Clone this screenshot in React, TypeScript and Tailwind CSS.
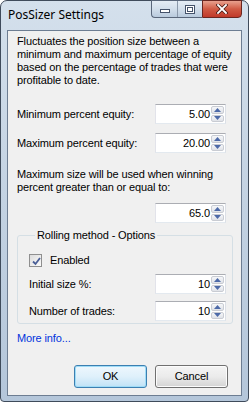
const ui = { fontFamily: '"Liberation Sans", Arial, sans-serif' };

function Spin({ value }: { value: string }) {
  return (
    <div className="w-[71px] h-[20px] flex bg-white border border-t-[#abadb3] border-l-[#e2e3ea] border-r-[#dbdfe6] border-b-[#e3e9ef]">
      <div className="flex-1 text-right text-[11px] leading-[18px] pr-[1px] text-black">{value}</div>
      <div className="w-[14px] flex flex-col gap-[1px] py-[1px] pr-[1px]">
        <SpinBtn up />
        <SpinBtn />
      </div>
    </div>
  );
}

function SpinBtn({ up }: { up?: boolean }) {
  return (
    <div className="flex-1 flex items-center justify-center border border-[#c9ccd3] rounded-[2px] bg-gradient-to-b from-[#f6f7f9] to-[#dfe2e8]">
      <svg width="7" height="4" viewBox="0 0 7 4">
        {up ? <path d="M3.5 0 L7 4 L0 4 Z" fill="#4d6aa8" /> : <path d="M0 0 L7 0 L3.5 4 Z" fill="#4d6aa8" />}
      </svg>
    </div>
  );
}

function SpinRow({ label, value }: { label: string; value: string }) {
  return (
    <div className="flex items-center h-[20px]">
      <span className="text-[11px] leading-[13px]">{label}</span>
      <div className="ml-auto">
        <Spin value={value} />
      </div>
    </div>
  );
}

function DlgButton({ children, primary }: { children: React.ReactNode; primary?: boolean }) {
  return (
    <div
      className={
        "w-[73px] h-[23px] rounded-[3px] border flex items-center justify-center text-[11px] " +
        (primary
          ? "border-[#3c7fb1] bg-gradient-to-b from-[#eef7fd] via-[#dff0fb] to-[#bfe2f6] shadow-[inset_0_0_0_1px_#9fdcf7]"
          : "border-[#707070] bg-gradient-to-b from-[#f4f4f4] via-[#ebebeb] to-[#d4d4d4] shadow-[inset_0_0_0_1px_#fcfcfc]")
      }
    >
      {children}
    </div>
  );
}

export default function App() {
  return (
    <div className="w-[249px] h-[402px] bg-white tracking-[-0.12px]" style={ui}>
      <div className="w-full h-full rounded-t-[7px] rounded-b-[4px] border border-[#3f4b5b] bg-gradient-to-b from-[#d4e0ec] via-[#c3d2e2] to-[#b4c6da] flex flex-col px-[6px] pb-[5px]">
        {/* title bar */}
        <div className="h-[29px] flex items-start shrink-0">
          <span className="mt-[7px] ml-[1px] text-[12px] leading-[14px] text-black tracking-normal" style={{ fontFamily: '"Noto Sans", "Liberation Sans", sans-serif' }}>
            PosSizer Settings
          </span>
          <div className="ml-auto flex mt-[-1px]">
            <div className="flex h-[18px] border border-[#59667a] border-r-0 rounded-bl-[4px] bg-gradient-to-b from-[#e4ecf5] via-[#d2deeb] to-[#b9cadd] overflow-hidden">
              <div className="w-[26px] flex items-center justify-center border-r border-[#8b99ab]">
                <div className="w-[10px] h-[4px] mt-[4px] border border-[#44526a] bg-white" />
              </div>
              <div className="w-[24px] flex items-center justify-center">
                <div className="w-[10px] h-[9px] border border-[#44526a] bg-white flex items-center justify-center">
                  <div className="w-[6px] h-[5px] border border-[#44526a]" />
                </div>
              </div>
            </div>
            <div className="w-[40px] h-[18px] flex items-center justify-center border border-[#6b2620] rounded-br-[4px] bg-gradient-to-b from-[#e8a08e] via-[#d05a44] to-[#c0392a]">
              <svg width="12" height="10" viewBox="0 0 12 10">
                <path d="M2 1 L10 9 M10 1 L2 9" stroke="#4a1a14" strokeWidth="3.4" strokeLinecap="square" />
                <path d="M2 1 L10 9 M10 1 L2 9" stroke="#ffffff" strokeWidth="1.8" strokeLinecap="square" />
              </svg>
            </div>
          </div>
        </div>

        {/* client area */}
        <div className="flex-1 bg-[#f0f0f0] border border-[#6d7d92] flex flex-col pl-[9px] pr-[15px] text-black">
          <p className="mt-[4px] text-[11px] leading-[13px] whitespace-nowrap">
            Fluctuates the position size between a<br />
            minimum and maximum percentage of equity<br />
            based on the percentage of trades that were<br />
            profitable to date.
          </p>

          <div className="mt-[17px]">
            <SpinRow label="Minimum percent equity:" value="5.00" />
          </div>
          <div className="mt-[9px]">
            <SpinRow label="Maximum percent equity:" value="20.00" />
          </div>

          <p className="mt-[15px] text-[11px] leading-[13px] whitespace-nowrap">
            Maximum size will be used when winning<br />
            percent greater than or equal to:
          </p>
          <div className="mt-[9px] flex justify-end">
            <Spin value="65.0" />
          </div>

          <fieldset className="mt-[6px] mr-[-7px] border border-[#d5dfe5] rounded-[3px] pl-[11px] pr-[6px] pb-[2px]">
            <legend className="ml-[6px] px-[2px] text-[11px] leading-[13px]">Rolling method - Options</legend>
            <div className="mt-[12px] flex items-center gap-[8px] h-[13px]">
              <div className="w-[13px] h-[13px] border border-[#8f8f8f] bg-gradient-to-br from-[#dcdcdc] to-[#fbfbfb] p-[2px]">
                <svg width="9" height="9" viewBox="0 0 9 9" className="block">
                  <path d="M1 4.5 L3.5 7 L8 1" stroke="#4a5f97" strokeWidth="1.8" fill="none" />
                </svg>
              </div>
              <span className="text-[11px] leading-[13px]">Enabled</span>
            </div>
            <div className="mt-[7px]">
              <SpinRow label="Initial size %:" value="10" />
            </div>
            <div className="mt-[7px]">
              <SpinRow label="Number of trades:" value="10" />
            </div>
          </fieldset>

          <div className="mt-[8px] text-[11px] leading-[13px] text-[#0033dd]">More info...</div>

          <div className="mt-auto mb-[7px] mr-[-2px] flex justify-end gap-[8px]">
            <DlgButton primary>OK</DlgButton>
            <DlgButton>Cancel</DlgButton>
          </div>
        </div>
      </div>
    </div>
  );
}
